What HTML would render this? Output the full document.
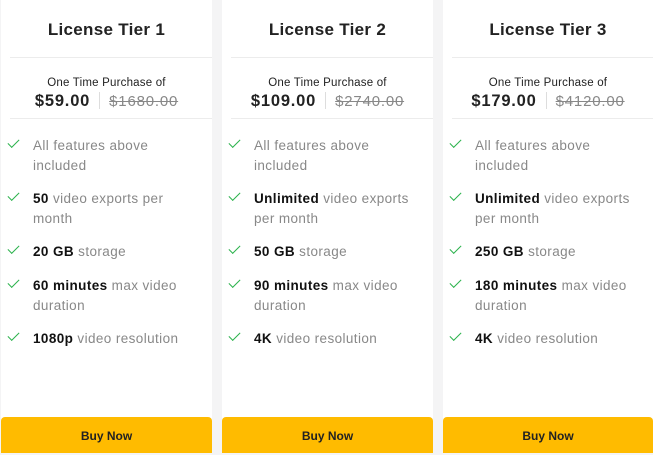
<html><head><style>
body{margin:0;width:653px;height:453px;background:#f4f4f5;font-family:"Liberation Sans",sans-serif;position:relative;overflow:hidden}
.c{position:absolute;top:0;height:453px;background:#fff;width:211px}
.t{position:absolute;top:20px;left:0;right:0;text-align:center;font-size:17px;font-weight:bold;color:#222;letter-spacing:0.3px}
.d{position:absolute;left:9px;right:0;height:1px;background:#ececec}
.o{position:absolute;top:77px;left:0;right:0;text-align:center;font-size:11.5px;color:#222;letter-spacing:0.2px}
.p{position:absolute;top:92px;left:0;right:0;text-align:center;font-size:16.5px;color:#222;letter-spacing:0.8px}
.p b{font-weight:bold}.p s{color:#888;font-size:15px}
.p i{display:inline-block;width:1px;height:17px;background:#ddd;vertical-align:-3px;margin:0 9px}
.f{position:absolute;left:32px;width:158px;font-size:13.5px;line-height:20px;color:#888;letter-spacing:0.4px}
.f b{color:#111}
.k{position:absolute;left:7px;width:10px;height:5px;border-left:1.5px solid #2bb24c;border-bottom:1.5px solid #2bb24c;transform:rotate(-45deg)}
.btn{position:absolute;left:0;right:0;top:417px;height:36px;background:#ffbb00;border-radius:4px 4px 0 0;text-align:center;line-height:38px;font-size:12px;font-weight:bold;color:#222}
</style></head><body>
<div class="c" style="left:1px">
<div class="t">License Tier 1</div><div class="d" style="top:57px"></div>
<div class="o">One Time Purchase of</div><div class="p"><b>$59.00</b><i></i><s>$1680.00</s></div>
<div class="d" style="top:118px"></div>
<div class="k" style="top:139px"></div><div class="f" style="top:136px">All features above included</div>
<div class="k" style="top:192px"></div><div class="f" style="top:189px"><b>50</b> video exports per month</div>
<div class="k" style="top:245px"></div><div class="f" style="top:242px"><b>20 GB</b> storage</div>
<div class="k" style="top:279px"></div><div class="f" style="top:276px"><b>60 minutes</b> max video duration</div>
<div class="k" style="top:332px"></div><div class="f" style="top:329px"><b>1080p</b> video resolution</div>
<div class="btn">Buy Now</div></div>
<div class="c" style="left:222px">
<div class="t">License Tier 2</div><div class="d" style="top:57px"></div>
<div class="o">One Time Purchase of</div><div class="p"><b>$109.00</b><i></i><s>$2740.00</s></div>
<div class="d" style="top:118px"></div>
<div class="k" style="top:139px"></div><div class="f" style="top:136px">All features above included</div>
<div class="k" style="top:192px"></div><div class="f" style="top:189px"><b>Unlimited</b> video exports per month</div>
<div class="k" style="top:245px"></div><div class="f" style="top:242px"><b>50 GB</b> storage</div>
<div class="k" style="top:279px"></div><div class="f" style="top:276px"><b>90 minutes</b> max video duration</div>
<div class="k" style="top:332px"></div><div class="f" style="top:329px"><b>4K</b> video resolution</div>
<div class="btn">Buy Now</div></div>
<div class="c" style="left:443px;width:210px">
<div class="t">License Tier 3</div><div class="d" style="top:57px"></div>
<div class="o">One Time Purchase of</div><div class="p"><b>$179.00</b><i></i><s>$4120.00</s></div>
<div class="d" style="top:118px"></div>
<div class="k" style="top:139px"></div><div class="f" style="top:136px">All features above included</div>
<div class="k" style="top:192px"></div><div class="f" style="top:189px"><b>Unlimited</b> video exports per month</div>
<div class="k" style="top:245px"></div><div class="f" style="top:242px"><b>250 GB</b> storage</div>
<div class="k" style="top:279px"></div><div class="f" style="top:276px"><b>180 minutes</b> max video duration</div>
<div class="k" style="top:332px"></div><div class="f" style="top:329px"><b>4K</b> video resolution</div>
<div class="btn">Buy Now</div></div>
</body></html>
